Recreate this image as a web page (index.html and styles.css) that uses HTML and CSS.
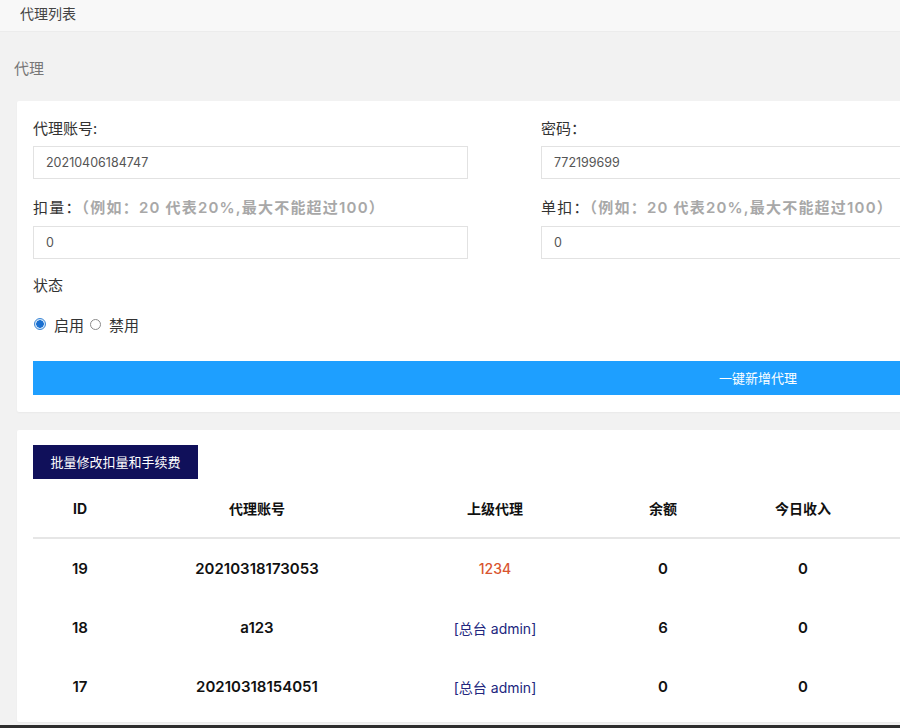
FILE: index.html
```html
<!DOCTYPE html>
<html lang="zh">
<head>
<meta charset="utf-8">
<title>代理列表</title>
<link rel="stylesheet" href="styles.css">
</head>
<body>
<div class="page">
  <div class="topbar">代理列表</div>
  <div class="section-title">代理</div>

  <div class="card form-card">
    <div class="grid">
      <div class="field">
        <div class="label">代理账号:</div>
        <div class="input">20210406184747</div>
      </div>
      <div class="field">
        <div class="label">密码：</div>
        <div class="input">772199699</div>
      </div>
      <div class="field"></div>
      <div class="field">
        <div class="label spaced">扣量：<span class="hint">（例如：20 代表20%,最大不能超过100）</span></div>
        <div class="input">0</div>
      </div>
      <div class="field">
        <div class="label spaced">单扣：<span class="hint">（例如：20 代表20%,最大不能超过100）</span></div>
        <div class="input">0</div>
      </div>
      <div class="field"></div>
    </div>
    <div class="label status-label">状态</div>
    <div class="radios">
      <span class="radio checked"></span><span class="radio-text">启用</span>
      <span class="radio"></span><span class="radio-text">禁用</span>
    </div>
    <div class="btn-primary">一键新增代理</div>
  </div>

  <div class="card table-card">
    <div class="btn-dark">批量修改扣量和手续费</div>
    <table class="list">
      <colgroup>
        <col class="c-id"><col class="c-acc"><col class="c-parent"><col class="c-bal"><col class="c-today"><col>
      </colgroup>
      <thead>
        <tr><th>ID</th><th>代理账号</th><th>上级代理</th><th>余额</th><th>今日收入</th><th></th></tr>
      </thead>
      <tbody>
        <tr><td>19</td><td>20210318173053</td><td><span class="parent-agent">1234</span></td><td>0</td><td>0</td><td></td></tr>
        <tr><td>18</td><td>a123</td><td><span class="parent-admin">[总台 admin]</span></td><td>6</td><td>0</td><td></td></tr>
        <tr><td>17</td><td>20210318154051</td><td><span class="parent-admin">[总台 admin]</span></td><td>0</td><td>0</td><td></td></tr>
      </tbody>
    </table>
  </div>
</div>
</body>
</html>
```

FILE: styles.css
```css
html, body {
  margin: 0;
  padding: 0;
}
body {
  background: #f2f2f2;
  overflow: hidden;
  font-family: "Noto Sans CJK SC", "Noto Sans", sans-serif;
  color: #333;
  height: 728px;
  box-sizing: border-box;
  border-bottom: 3px solid #2e2e2e;
}
.page {
  width: 1500px;
}
.topbar {
  height: 32px;
  box-sizing: border-box;
  background: #f8f8f8;
  border-bottom: 1px solid #ececec;
  padding: 3px 0 0 20px;
  font-size: 14px;
  line-height: 20px;
  color: #444;
}
.section-title {
  padding: 26px 0 0 14px;
  height: 69px;
  box-sizing: border-box;
  font-size: 15px;
  line-height: 20px;
  color: #777;
}
.card {
  background: #fff;
  margin-left: 17px;
  width: 1482px;
  box-sizing: border-box;
  border-radius: 2px;
  box-shadow: 0 1px 2px rgba(0,0,0,0.04);
}
.form-card {
  padding: 16px 16px 17px 16px;
}
.grid {
  display: grid;
  grid-template-columns: 435px 435px 435px;
  column-gap: 73px;
  row-gap: 17px;
}
.label {
  font-size: 15px;
  line-height: 22px;
  color: #333;
  margin-bottom: 7px;
}
.label.spaced {
  letter-spacing: 1.2px;
}
.hint {
  font-family: Inter, "Noto Sans CJK SC", sans-serif;
  color: #a8a8a8;
  font-weight: 600;
  font-size: 15px;
}
.input {
  height: 33px;
  box-sizing: border-box;
  border: 1px solid #e2e2e2;
  padding: 0 12px;
  font-family: Inter, "Noto Sans CJK SC", sans-serif;
  font-size: 12.5px;
  line-height: 31px;
  color: #555;
}
.status-label {
  margin-top: 15px;
  margin-bottom: 17px;
}
.radios {
  display: flex;
  align-items: center;
  height: 22px;
  font-size: 15px;
  color: #333;
}
.radio {
  width: 11px;
  height: 11px;
  border-radius: 50%;
  border: 1px solid #8a8a8a;
  box-sizing: border-box;
  background: #fff;
}
.radio.checked {
  width: 12px;
  height: 12px;
  margin-left: 1px;
  border: 1px solid #3b86d6;
  background: radial-gradient(circle, #1a6fd0 0, #1a6fd0 3.5px, #cfe4f8 4px);
}
.radio-text {
  margin: 0 6px 0 8px;
}
.btn-primary {
  margin-top: 26px;
  height: 34px;
  background: #1e9fff;
  color: #fff;
  font-size: 13px;
  line-height: 34px;
  text-align: center;
}
.table-card {
  margin-top: 18px;
  padding: 15px 16px 6px 16px;
}
.btn-dark {
  display: inline-block;
  width: 165px;
  height: 34px;
  box-sizing: border-box;
  background: #10105a;
  color: #fff;
  font-size: 13px;
  line-height: 34px;
  text-align: center;
}
.list {
  width: 100%;
  border-collapse: collapse;
  table-layout: fixed;
  font-family: Inter, "Noto Sans CJK SC", sans-serif;
  font-size: 15px;
  color: #111;
}
.c-id { width: 94px; }
.c-acc { width: 260px; }
.c-parent { width: 216px; }
.c-bal { width: 120px; }
.c-today { width: 160px; }
.list th {
  height: 58px;
  font-weight: 700;
  font-size: 14px;
  text-align: center;
  border-bottom: 2px solid #e6e6e6;
  padding: 0;
  vertical-align: middle;
}
.list td {
  height: 59px;
  padding: 0;
  text-align: center;
  font-weight: 600;
  vertical-align: middle;
}
.parent-agent {
  color: #d9552f;
  font-weight: 500;
  font-size: 14px;
}
.parent-admin {
  color: #22267e;
  font-weight: 400;
  font-size: 14px;
}
```
